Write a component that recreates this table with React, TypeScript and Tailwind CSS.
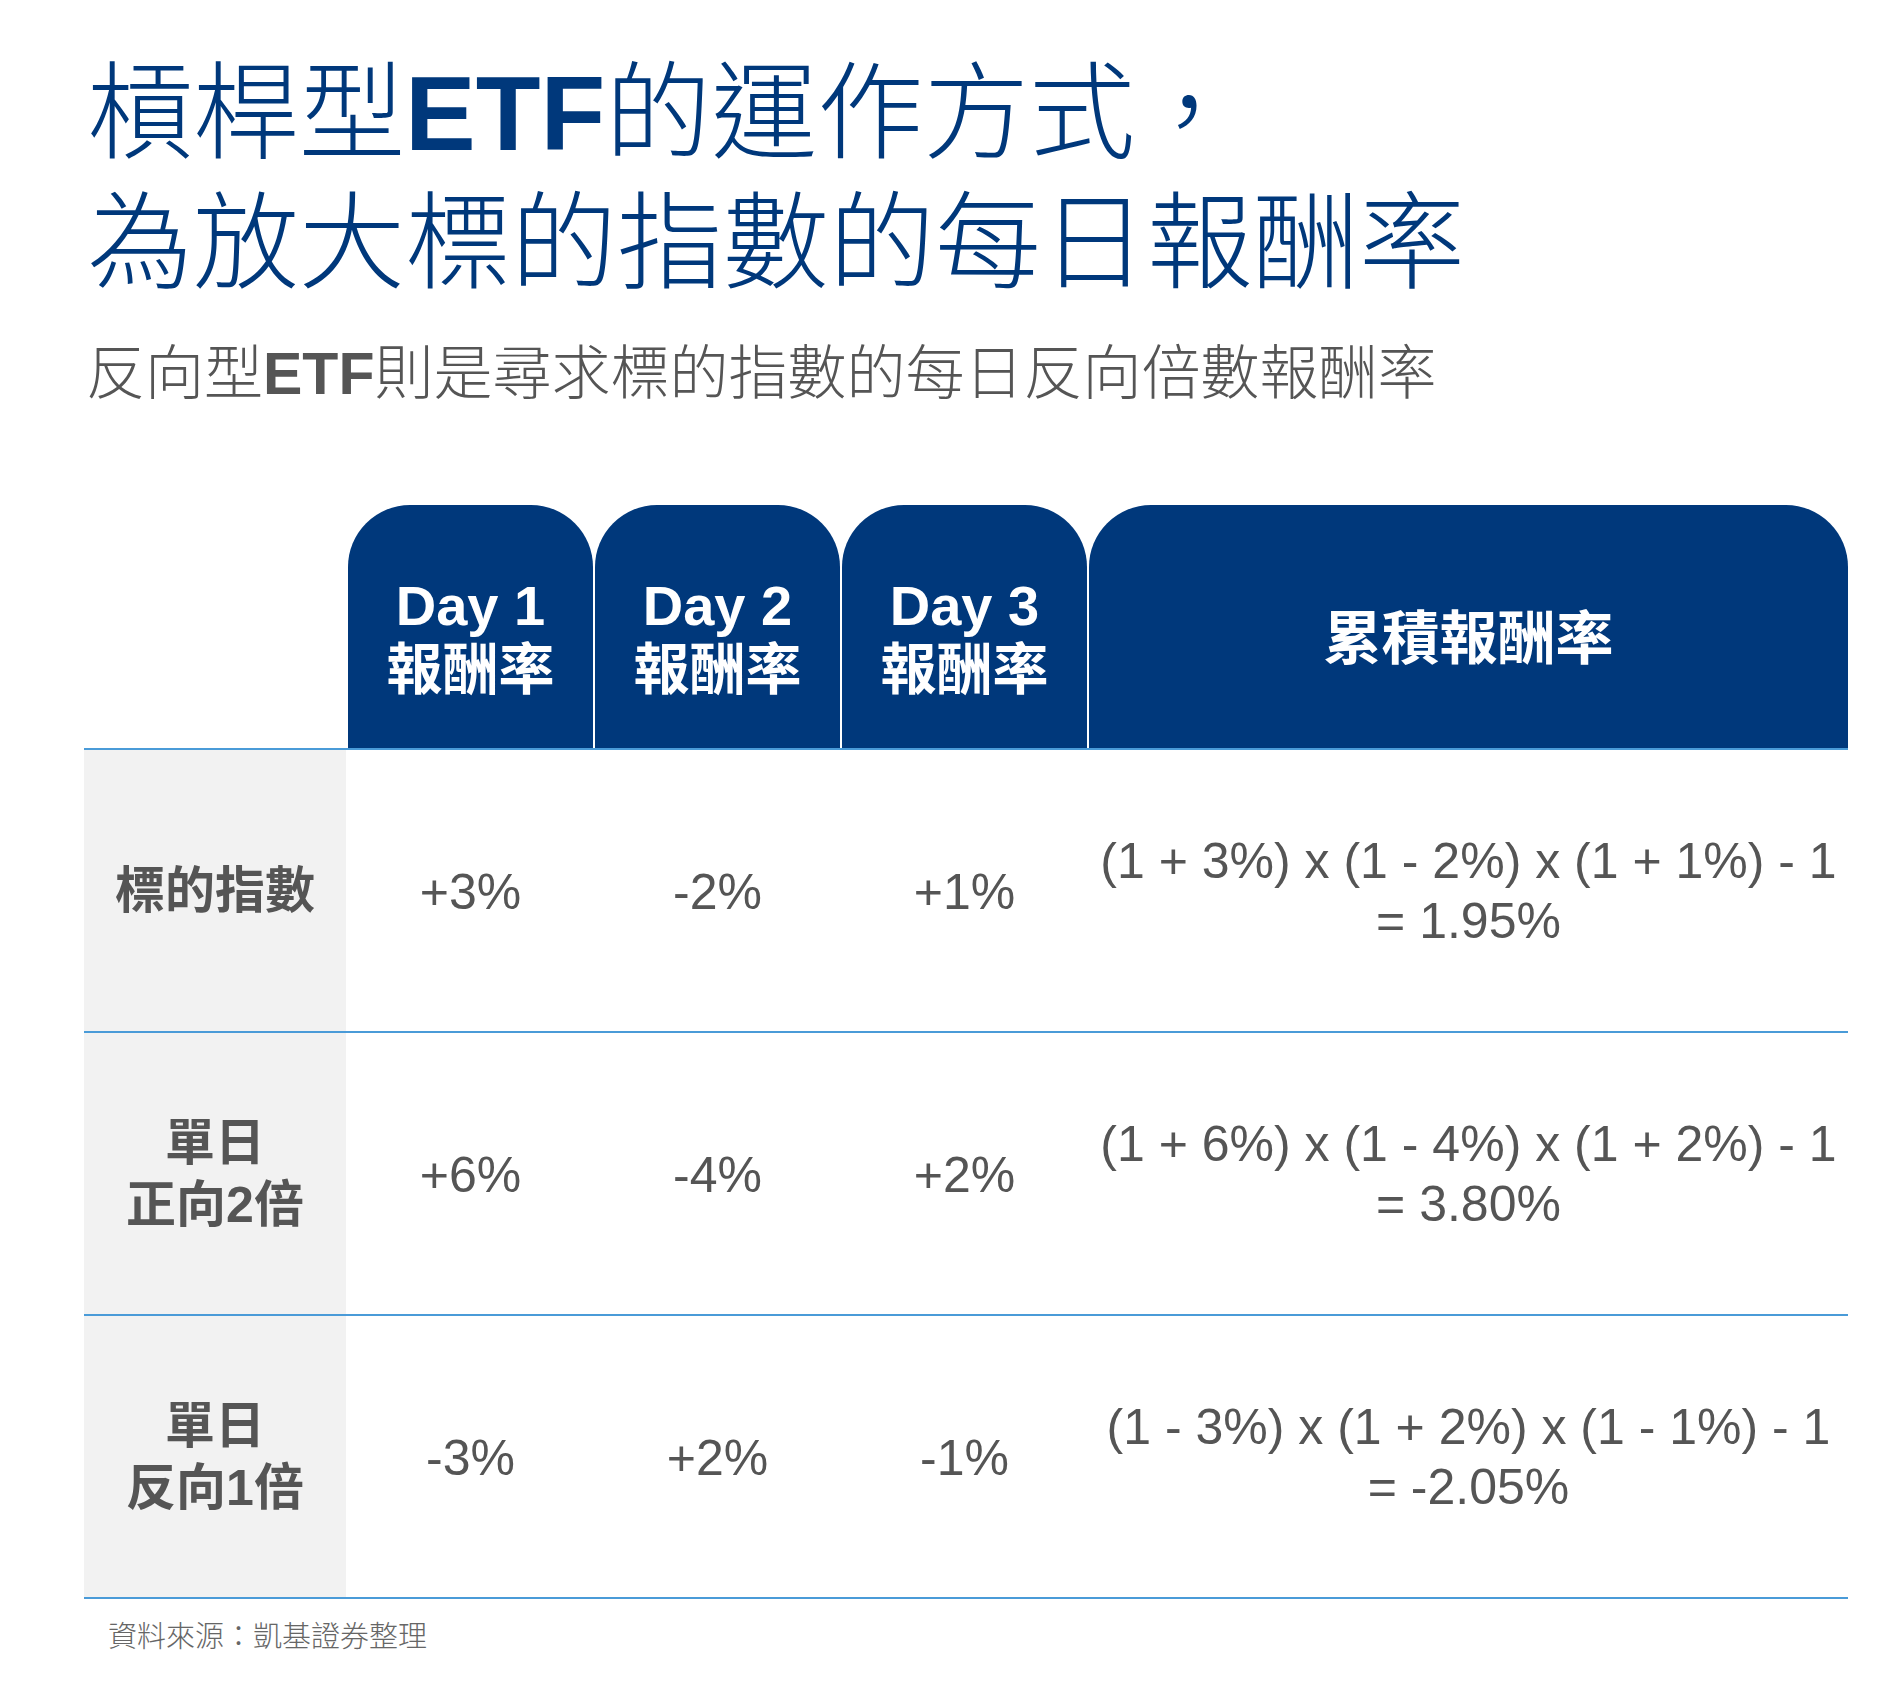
const font = "font-['Liberation_Sans','Noto_Sans_CJK_TC',sans-serif]";

const cols = "grid grid-cols-[262px_245px_245px_245px_759px] gap-x-[2px]";

interface Row {
  label: string[];
  days: string[];
  formula: string;
  result: string;
}

const rows: Row[] = [
  {
    label: ["標的指數"],
    days: ["+3%", "-2%", "+1%"],
    formula: "(1 + 3%) x (1 - 2%) x (1 + 1%) - 1",
    result: "= 1.95%",
  },
  {
    label: ["單日", "正向2倍"],
    days: ["+6%", "-4%", "+2%"],
    formula: "(1 + 6%) x (1 - 4%) x (1 + 2%) - 1",
    result: "= 3.80%",
  },
  {
    label: ["單日", "反向1倍"],
    days: ["-3%", "+2%", "-1%"],
    formula: "(1 - 3%) x (1 + 2%) x (1 - 1%) - 1",
    result: "= -2.05%",
  },
];

function DayTab({ n }: { n: number }) {
  return (
    <div className="flex h-full flex-col items-center justify-center rounded-t-[62px] bg-[#00387b] pt-[22px] text-white">
      <div className="text-[56px] font-bold leading-[64px]">Day {n}</div>
      <div className="text-[56px] font-bold leading-[64px]">報酬率</div>
    </div>
  );
}

export default function App() {
  return (
    <div className={`${font} h-[1701px] w-[1890px] bg-white pl-[84px] pt-[48px]`}>
      <h1 className="pl-[3px] text-[106px] font-light leading-[130px] text-[#00387b]">
        槓桿型<span className="font-bold">ETF</span>的運作方式，
        <br />
        為放大標的指數的每日報酬率
      </h1>
      <p className="mt-[31px] pl-[2px] text-[59px] font-light leading-[70px] text-[#555555]">
        反向型<span className="font-bold">ETF</span>則是尋求標的指數的每日反向倍數報酬率
      </p>

      <div className="mt-[96px] w-[1764px]">
        {/* header tabs */}
        <div className={`${cols} h-[243px]`}>
          <div />
          <DayTab n={1} />
          <DayTab n={2} />
          <DayTab n={3} />
          <div className="flex h-full items-center justify-center rounded-t-[62px] bg-[#00387b] pt-[24px] text-[58px] font-bold text-white">
            累積報酬率
          </div>
        </div>

        {rows.map((row, i) => (
          <div
            key={i}
            className={`${cols} h-[283px] border-t-2 border-[#4a9bd8] ${
              i === rows.length - 1 ? "h-[285px] border-b-2" : ""
            }`}
          >
            <div className="flex flex-col items-center justify-center bg-[#f2f2f2] text-[50px] font-bold leading-[62px] text-[#555555]">
              {row.label.map((l) => (
                <div key={l}>{l}</div>
              ))}
            </div>
            {row.days.map((d, j) => (
              <div
                key={j}
                className="flex items-center justify-center pt-[4px] text-[50px] text-[#555555]"
              >
                {d}
              </div>
            ))}
            <div className="flex flex-col items-center justify-center text-[50px] leading-[60px] text-[#555555]">
              <div>{row.formula}</div>
              <div>{row.result}</div>
            </div>
          </div>
        ))}

        <p className="mt-[20px] pl-[24px] text-[29px] font-light leading-[36px] text-[#666666]">
          資料來源：凱基證券整理
        </p>
      </div>
    </div>
  );
}
